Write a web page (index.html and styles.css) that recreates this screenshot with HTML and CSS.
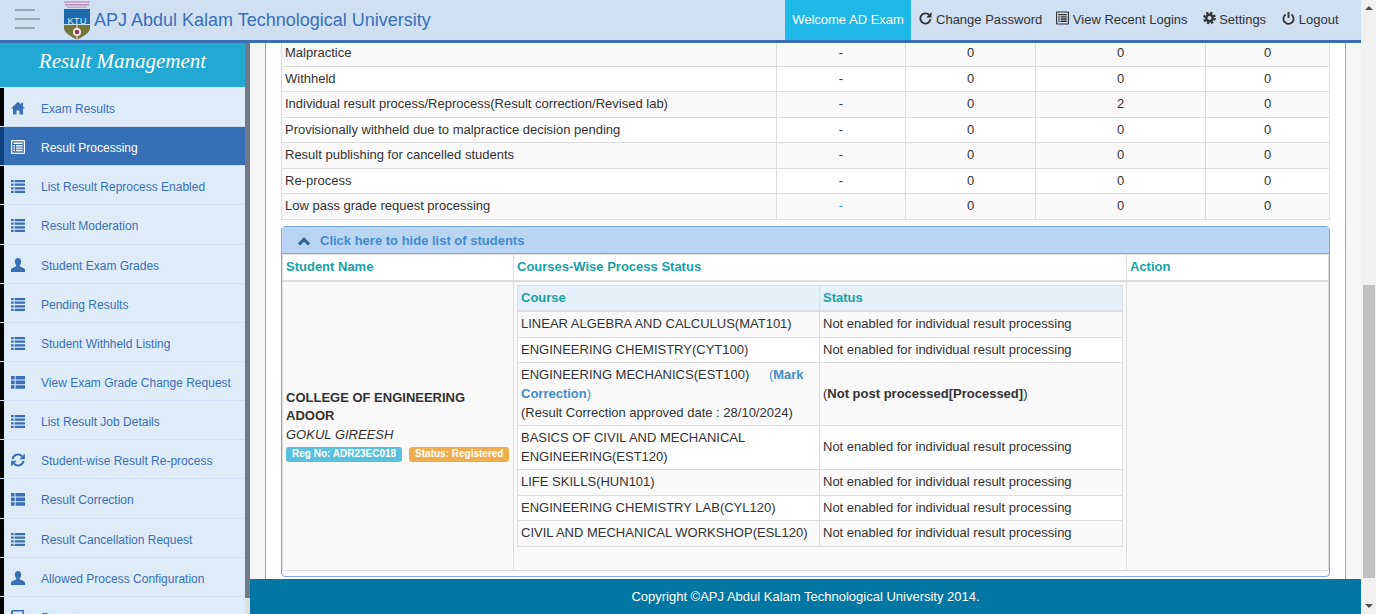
FILE: index.html
```html
<!DOCTYPE html>
<html lang="en">
<head>
  <meta charset="UTF-8">
  <title>Result Processing</title>
  <link rel="stylesheet" href="styles.css">
</head>
<body>
<svg class="sprite" xmlns="http://www.w3.org/2000/svg">
  <symbol id="i-home" viewBox="0 0 14 14"><path d="M7 .8 10 3.600V1.800h2v3.700L14 7.500H12V13.500H8.500V9.500H5.500V13.500H2V7.500H0Z"/></symbol>
  <symbol id="i-list" viewBox="0 0 14 14"><path d="M0 1h2.600v2.200H0ZM3.600 1H14v2.200H3.600ZM0 4.600h2.600v2.200H0ZM3.600 4.600H14v2.200H3.600ZM0 8.200h2.600v2.200H0ZM3.600 8.200H14v2.200H3.600ZM0 11.800h2.600V14H0ZM3.600 11.800H14V14H3.600Z"/></symbol>
  <symbol id="i-th" viewBox="0 0 14 14"><path d="M0 1h3.600v3.600H0ZM4.600 1H14v3.600H4.600ZM0 5.600h3.600v3.600H0ZM4.600 5.600H14v3.600H4.600ZM0 10.200h3.600v3.600H0ZM4.600 10.200H14v3.600H4.600Z"/></symbol>
  <symbol id="i-alt" viewBox="0 0 14 14"><path fill-rule="evenodd" d="M1 0h12a1 1 0 0 1 1 1v12a1 1 0 0 1-1 1H1a1 1 0 0 1-1-1V1a1 1 0 0 1 1-1ZM1.200 1.200v11.600h11.600V1.200ZM2.400 2.600h9.200v1.500H2.400ZM2.400 5h1.600v1.400H2.400ZM5 5h6.600v1.400H5ZM2.400 7.400h1.600v1.400H2.400ZM5 7.400h6.600v1.400H5ZM2.400 9.800h1.600v1.400H2.400ZM5 9.800h6.600v1.400H5Z"/></symbol>
  <symbol id="i-user" viewBox="0 0 14 14"><path d="M7 0c2 0 3.200 1.500 3.200 3.600 0 1.500-.6 2.900-1.400 3.700-.3.4-.2.9.3 1.200 1.900.9 4.900 1.700 4.900 3.300V14H0v-2.200c0-1.600 3-2.400 4.900-3.300.5-.3.6-.8.3-1.200-.8-.8-1.400-2.200-1.400-3.700C3.800 1.500 5 0 7 0Z"/></symbol>
  <symbol id="i-refresh" viewBox="0 0 14 14"><path d="M1.500 6.200A5.600 5.600 0 0 1 11 3.200" fill="none" stroke="currentColor" stroke-width="2"/><path d="M13.800 .6V6.300H8.200Z"/><path d="M12.500 7.800A5.600 5.600 0 0 1 3 10.800" fill="none" stroke="currentColor" stroke-width="2"/><path d="M.2 13.400V7.700H5.800Z"/></symbol>
  <symbol id="i-repeat" viewBox="0 0 14 14"><path d="M10.800 3.500A5.500 5.500 0 1 0 12.400 8" fill="none" stroke="currentColor" stroke-width="1.900"/><path d="M13.500 .6V6.400H7.800Z"/></symbol>
  <symbol id="i-cog" viewBox="0 0 14 14"><circle cx="7" cy="7" r="5.600" fill="none" stroke="currentColor" stroke-width="2.400" stroke-dasharray="2.500 1.900"/><circle cx="7" cy="7" r="3.500" fill="none" stroke="currentColor" stroke-width="2.600"/></symbol>
  <symbol id="i-off" viewBox="0 0 14 14"><path d="M4 3.200a5.500 5.500 0 1 0 6 0" fill="none" stroke="currentColor" stroke-width="1.900"/><path d="M6 .4h2v6.600H6Z"/></symbol>
  <symbol id="i-up" viewBox="0 0 14 14"><path d="M2 10.500 7 5.300l5 5.200" fill="none" stroke="currentColor" stroke-width="3.200"/></symbol>
  <symbol id="i-book" viewBox="0 0 14 14"><path fill-rule="evenodd" d="M2 0h11v14H2a2 2 0 0 1-2-2V2a2 2 0 0 1 2-2Zm0 1.500v9h9.500v-9Z"/></symbol>
</svg>

<div class="page">
  <div class="window">
    <header class="topbar">
      <div class="burger"><span class="b1"></span><span class="b2"></span><span class="b3"></span></div>
      <svg class="logo" viewBox="0 0 26 39" xmlns="http://www.w3.org/2000/svg">
        <rect x="0" y="0" width="26" height="2" fill="#c9a9c9"/>
        <rect x="1" y="3" width="24" height="1.500" fill="#b68ab8"/>
        <rect x="3" y="5.500" width="20" height="1.500" fill="#c9a9c9"/>
        <rect x="0" y="8" width="26" height="15" fill="#1c69ad"/>
        <text x="13" y="22.500" text-anchor="middle" font-family="Liberation Sans" font-size="9.500" fill="#dfe9f3">KTU</text>
        <path d="M0 24h26v3c0 5-7 8-13 12C7 35 0 32 0 27Z" fill="#77763a"/>
        <rect x="12.500" y="24" width="1" height="15" fill="#f3eee6"/>
        <circle cx="13" cy="31" r="4" fill="#f3eee6"/>
        <circle cx="13" cy="31" r="2.200" fill="#a0265c"/>
      </svg>
      <div class="brand">APJ Abdul Kalam Technological University</div>
      <nav class="topnav">
        <a class="welcome">Welcome AD Exam</a>
        <a class="password"><svg class="ico"><use href="#i-repeat"/></svg> Change Password</a>
        <a><svg class="ico"><use href="#i-alt"/></svg> View Recent Logins</a>
        <a><svg class="ico"><use href="#i-cog"/></svg> Settings</a>
        <a class="logout"><svg class="ico"><use href="#i-off"/></svg> Logout</a>
      </nav>
    </header>

    <div class="main">
      <aside class="sidebar">
        <div class="side-col">
          <div class="side-title">Result Management</div>
          <ul class="side-menu">
            <li><a><svg class="ico"><use href="#i-home"/></svg>Exam Results</a></li>
            <li class="active"><a><svg class="ico"><use href="#i-alt"/></svg>Result Processing</a></li>
            <li><a><svg class="ico"><use href="#i-list"/></svg>List Result Reprocess Enabled</a></li>
            <li><a><svg class="ico"><use href="#i-list"/></svg>Result Moderation</a></li>
            <li><a><svg class="ico"><use href="#i-user"/></svg>Student Exam Grades</a></li>
            <li><a><svg class="ico"><use href="#i-list"/></svg>Pending Results</a></li>
            <li><a><svg class="ico"><use href="#i-list"/></svg>Student Withheld Listing</a></li>
            <li><a><svg class="ico"><use href="#i-th"/></svg>View Exam Grade Change Request</a></li>
            <li><a><svg class="ico"><use href="#i-list"/></svg>List Result Job Details</a></li>
            <li><a><svg class="ico"><use href="#i-refresh"/></svg>Student-wise Result Re-process</a></li>
            <li><a><svg class="ico"><use href="#i-th"/></svg>Result Correction</a></li>
            <li><a><svg class="ico"><use href="#i-list"/></svg>Result Cancellation Request</a></li>
            <li><a><svg class="ico"><use href="#i-user"/></svg>Allowed Process Configuration</a></li>
            <li><a><svg class="ico"><use href="#i-book"/></svg>Reports</a></li>
          </ul>
        </div>
        <div class="side-track"><div class="side-thumb"></div></div>
      </aside>

      <div class="right">
        <div class="content">
          <div class="box">
            <table class="grid summary">
              <colgroup><col class="c-reason"><col class="c-a"><col class="c-b"><col class="c-c"><col class="c-d"></colgroup>
              <tr><td>Malpractice</td><td>-</td><td>0</td><td>0</td><td>0</td></tr>
              <tr><td>Withheld</td><td>-</td><td>0</td><td>0</td><td>0</td></tr>
              <tr><td>Individual result process/Reprocess(Result correction/Revised lab)</td><td>-</td><td>0</td><td>2</td><td>0</td></tr>
              <tr><td>Provisionally withheld due to malpractice decision pending</td><td>-</td><td>0</td><td>0</td><td>0</td></tr>
              <tr><td>Result publishing for cancelled students</td><td>-</td><td>0</td><td>0</td><td>0</td></tr>
              <tr><td>Re-process</td><td>-</td><td>0</td><td>0</td><td>0</td></tr>
              <tr><td>Low pass grade request processing</td><td><a class="link">-</a></td><td>0</td><td>0</td><td>0</td></tr>
            </table>

            <section class="panel">
              <div class="panel-head"><svg class="ico"><use href="#i-up"/></svg><a>Click here to hide list of students</a></div>
              <table class="grid students">
                <colgroup><col class="c-name"><col class="c-courses"><col class="c-action"></colgroup>
                <thead>
                  <tr><th>Student Name</th><th>Courses-Wise Process Status</th><th>Action</th></tr>
                </thead>
                <tbody>
                  <tr>
                    <td class="student">
                      <b>COLLEGE OF ENGINEERING ADOOR</b><br>
                      <i>GOKUL GIREESH</i><br>
                      <div class="tags"><span class="tag tag-info">Reg No: ADR23EC018</span><span class="tag tag-warn">Status: Registered</span></div>
                    </td>
                    <td class="courses">
                      <table class="grid inner">
                        <colgroup><col class="c-course"><col class="c-status"></colgroup>
                        <thead><tr><th>Course</th><th>Status</th></tr></thead>
                        <tbody>
                          <tr><td>LINEAR ALGEBRA AND CALCULUS(MAT101)</td><td>Not enabled for individual result processing</td></tr>
                          <tr><td>ENGINEERING CHEMISTRY(CYT100)</td><td>Not enabled for individual result processing</td></tr>
                          <tr><td>ENGINEERING MECHANICS(EST100) <a class="link mark">(<b>Mark Correction</b>)</a><br>(Result Correction approved date : 28/10/2024)</td><td>(<b>Not post processed[Processed]</b>)</td></tr>
                          <tr><td>BASICS OF CIVIL AND MECHANICAL ENGINEERING(EST120)</td><td>Not enabled for individual result processing</td></tr>
                          <tr><td>LIFE SKILLS(HUN101)</td><td>Not enabled for individual result processing</td></tr>
                          <tr><td>ENGINEERING CHEMISTRY LAB(CYL120)</td><td>Not enabled for individual result processing</td></tr>
                          <tr><td>CIVIL AND MECHANICAL WORKSHOP(ESL120)</td><td>Not enabled for individual result processing</td></tr>
                        </tbody>
                      </table>
                    </td>
                    <td></td>
                  </tr>
                </tbody>
              </table>
            </section>
          </div>
        </div>
        <footer class="footer">Copyright ©APJ Abdul Kalam Technological University 2014.</footer>
      </div>
    </div>
  </div>

  <div class="scrollbar">
    <div class="arrow-up"></div>
    <div class="scroll-space"><div class="scroll-thumb"></div></div>
    <div class="arrow-down"></div>
  </div>
</div>
</body>
</html>
```

FILE: styles.css
```css
* {
    box-sizing: border-box;
}
html, body {
    height: 100%;
}
body {
    margin: 0;
    overflow: hidden;
    font-family: "Liberation Sans", Arial, sans-serif;
    font-size: 13px;
    line-height: 1.42857;
    color: #333;
}
.sprite {
    display: none;
}
.ico {
    width: 14px;
    height: 14px;
    fill: currentColor;
    flex: none;
}
.page {
    display: flex;
    height: 614px;
}
.window {
    width: 1361px;
    display: flex;
    flex-direction: column;
}

/* top bar */
.topbar {
    height: 43px;
    flex: none;
    display: flex;
    align-items: flex-start;
    background-color: #cfe0f3;
    border-bottom: 3px solid #3a6fb8;
}
.burger {
    width: 64px;
    padding: 9px 0 0 15px;
}
.burger span {
    display: block;
    height: 2px;
    margin-bottom: 7px;
    background-color: #97a9b6;
}
.burger .b1, .burger .b3 {
    width: 20px;
}
.burger .b2 {
    width: 25px;
}
.logo {
    width: 26px;
    height: 39px;
    margin-top: 1px;
    flex: none;
}
.brand {
    margin-left: 4px;
    font-size: 18px;
    line-height: 40px;
    color: #3a6fb8;
}
.topnav {
    margin-left: auto;
    display: flex;
    padding-right: 15px;
}
.topnav a {
    height: 40px;
    padding: 0 7.5px;
    font-size: 13px;
    line-height: 39px;
    white-space: nowrap;
}
.topnav a .ico {
    width: 13px;
    vertical-align: -1px;
}
.topnav .welcome {
    padding: 0 7px;
    margin-right: 1px;
    background-color: #1fb8e6;
    color: #fff;
}
.topnav .password {
    padding-right: 6.5px;
}
.topnav .logout {
    margin-left: 1px;
}

/* sidebar */
.main {
    flex: 1;
    display: flex;
    min-height: 0;
}
.sidebar {
    width: 250px;
    flex: none;
    display: flex;
    overflow: hidden;
    background-color: #deecf9;
}
.side-col {
    width: 245px;
}
.side-title {
    height: 44px;
    margin-bottom: 1px;
    background-color: #21a9d3;
    color: #fff;
    font-family: "Liberation Serif", serif;
    font-style: italic;
    font-size: 21px;
    line-height: 37px;
    text-align: center;
}
.side-menu {
    list-style: none;
    margin: 0;
    padding: 0;
}
.side-menu li {
    border-bottom: 1px solid #cfe0f5;
}
.side-menu a {
    display: flex;
    align-items: center;
    height: 38.15px;
    padding: 5px 0 0 7px;
    border-left: 4px solid #000;
    font-size: 12px;
    color: #3a6fb8;
}
.side-menu .ico {
    margin-right: 16px;
    margin-top: -3px;
}
.side-menu .active a {
    background-color: #376fb7;
    border-left-color: #0e4080;
    color: #fff;
}
.side-track {
    width: 5px;
    background-color: #e0e0e0;
}
.side-thumb {
    height: 555px;
    background-color: #707b88;
}

/* content */
.right {
    flex: 1;
    min-width: 0;
    display: flex;
    flex-direction: column;
}
.content {
    flex: 1;
    min-height: 0;
    padding: 0 15px;
    background-color: #f5f5f5;
}
.box {
    height: 100%;
    padding: 0 15px;
    overflow: hidden;
    background-color: #fff;
    border-left: 1px solid #7aa9e6;
    border-right: 1px solid #7aa9e6;
}
.footer {
    height: 35px;
    flex: none;
    background-color: #0476a4;
    color: #fff;
    text-align: center;
    line-height: 35px;
}

/* tables */
.grid {
    width: 100%;
    border-collapse: collapse;
    table-layout: fixed;
}
.grid td, .grid th {
    padding: 3px;
    border: 1px solid #ddd;
    text-align: left;
    vertical-align: middle;
}
.grid th {
    color: #17a2a6;
    border-bottom-width: 2px;
}
.link {
    color: #428bca;
}
.mark {
    margin-left: 16px;
}
.summary {
    margin-top: -3px;
    margin-bottom: 6.3px;
}
.summary tr:nth-child(odd) td {
    background-color: #f9f9f9;
}
.summary td:not(:first-child) {
    text-align: center;
}
.c-reason { width: 495px; }
.c-a { width: 129px; }
.c-b { width: 130px; }
.c-c { width: 170px; }
.c-name { width: 231px; }
.c-action { width: 202px; }
.c-course { width: 302px; }

.panel {
    border: 1px solid #7aa9e6;
    border-radius: 4px;
    padding-bottom: 5px;
}
.panel-head {
    height: 27px;
    display: flex;
    align-items: center;
    padding: 2px 0 0 15px;
    background-color: #bad5f3;
    border-bottom: 1px solid #7aa9e6;
    font-weight: bold;
    color: #2f6a94;
}
.panel-head a {
    margin-left: 9px;
    color: #428bca;
}
.students > tbody > tr > td {
    background-color: #f9f9f9;
}
.students .courses {
    vertical-align: top;
    padding-bottom: 23px;
}
.tags {
    white-space: nowrap;
}
.tag {
    display: inline-block;
    padding: 1px 6px 2px;
    margin-right: 7px;
    border-radius: 3px;
    font-size: 10px;
    font-weight: bold;
    line-height: 12px;
    color: #fff;
}
.tag:last-child {
    margin-right: 0;
}
.tag-info {
    background-color: #5bc0de;
}
.tag-warn {
    background-color: #f0ad4e;
}
.inner th {
    background-color: #e6f0fb;
}
.inner tbody tr:nth-child(odd) td {
    background-color: #f9f9f9;
}
.inner tbody tr:nth-child(even) td {
    background-color: #fff;
}

/* page scrollbar */
.scrollbar {
    width: 15px;
    flex: none;
    display: flex;
    flex-direction: column;
    background-color: #f1f1f1;
}
.arrow-up, .arrow-down {
    flex: none;
    margin: 0 auto;
    width: 0;
    height: 0;
    border-left: 4px solid transparent;
    border-right: 4px solid transparent;
}
.arrow-up {
    margin-top: 6px;
    margin-bottom: 5px;
    border-bottom: 4px solid #505050;
}
.arrow-down {
    margin-top: 5px;
    margin-bottom: 6px;
    border-top: 4px solid #505050;
}
.scroll-space {
    flex: 1;
    padding: 270px 1px 21px 2px;
}
.scroll-thumb {
    height: 100%;
    background-color: #c1c1c1;
}
```
